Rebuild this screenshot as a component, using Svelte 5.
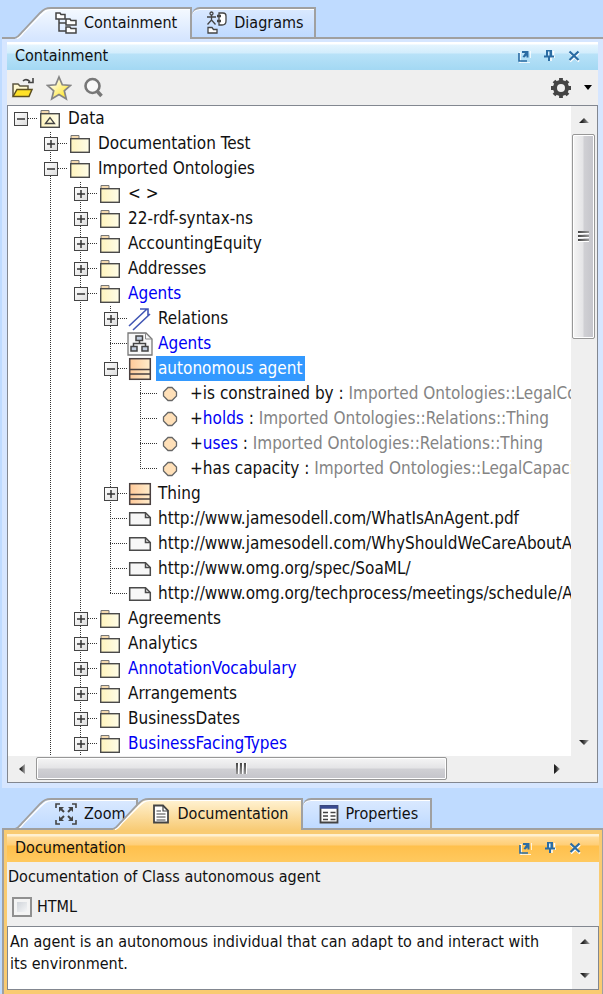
<script lang="ts">
	type IconKind = "model" | "package" | "relations" | "diagram" | "class" | "property" | "file";

	interface TreeRow {
		level: number;
		icon: IconKind;
		text: string;
		/** "+" collapsed, "-" expanded, missing for a leaf */
		toggle?: "+" | "-";
		type?: string;
		link?: boolean;
		selected?: boolean;
		last?: boolean;
	}

	const rows: TreeRow[] = [
		{ level: 0, icon: "model", text: "Data", toggle: "-" },
		{ level: 1, icon: "package", text: "Documentation Test", toggle: "+" },
		{ level: 1, icon: "package", text: "Imported Ontologies", toggle: "-" },
		{ level: 2, icon: "package", text: "< >", toggle: "+" },
		{ level: 2, icon: "package", text: "22-rdf-syntax-ns", toggle: "+" },
		{ level: 2, icon: "package", text: "AccountingEquity", toggle: "+" },
		{ level: 2, icon: "package", text: "Addresses", toggle: "+" },
		{ level: 2, icon: "package", text: "Agents", toggle: "-", link: true },
		{ level: 3, icon: "relations", text: "Relations", toggle: "+" },
		{ level: 3, icon: "diagram", text: "Agents", link: true },
		{ level: 3, icon: "class", text: "autonomous agent", toggle: "-", selected: true },
		{ level: 4, icon: "property", text: "is constrained by", type: "Imported Ontologies::LegalCon" },
		{ level: 4, icon: "property", text: "holds", type: "Imported Ontologies::Relations::Thing", link: true },
		{ level: 4, icon: "property", text: "uses", type: "Imported Ontologies::Relations::Thing", link: true },
		{ level: 4, icon: "property", text: "has capacity", type: "Imported Ontologies::LegalCapacity", last: true },
		{ level: 3, icon: "class", text: "Thing", toggle: "+" },
		{ level: 3, icon: "file", text: "http://www.jamesodell.com/WhatIsAnAgent.pdf" },
		{ level: 3, icon: "file", text: "http://www.jamesodell.com/WhyShouldWeCareAboutA" },
		{ level: 3, icon: "file", text: "http://www.omg.org/spec/SoaML/" },
		{ level: 3, icon: "file", text: "http://www.omg.org/techprocess/meetings/schedule/A", last: true },
		{ level: 2, icon: "package", text: "Agreements", toggle: "+" },
		{ level: 2, icon: "package", text: "Analytics", toggle: "+" },
		{ level: 2, icon: "package", text: "AnnotationVocabulary", toggle: "+", link: true },
		{ level: 2, icon: "package", text: "Arrangements", toggle: "+" },
		{ level: 2, icon: "package", text: "BusinessDates", toggle: "+" },
		{ level: 2, icon: "package", text: "BusinessFacingTypes", toggle: "+", link: true },
	];

	let html = $state(false);
	let documentation = $state(
		"An agent is an autonomous individual that can adapt to and interact with its environment."
	);
</script>

{#snippet slope(fill: string, active: boolean)}
	<svg class="slope" width="36" height="32" viewBox="0 0 36 32" aria-hidden="true">
		<path d="M0 32V31C4 31 5 28 8 25L25 7C29 3 31 1 36 1V32Z" {fill} />
		<path d="M2 31.500C6 30 7 27 9 25L26 8C30 4 32 2.500 36 2.500" fill="none" stroke="#fff" stroke-width="1.500" />
		<path d="M0 31C4 30 5 27 8 24L25 6C29 2 31 1 36 1" fill="none" stroke="#a0a0a0" stroke-width="1.800" />
		{#if !active}
			<path d="M0 31H36" stroke="#a0a0a0" stroke-width="2" />
		{/if}
	</svg>
{/snippet}

{#snippet panelButtons()}
	<div class="panel-buttons">
		<button aria-label="Float">
			<svg width="14" height="14" viewBox="0 0 14 14">
				<path d="M3 3V14H13M14 2V9" fill="none" stroke="#fff" stroke-width="1.500" />
				<path d="M2 4V12H10" fill="none" stroke="#2b6ca3" stroke-width="1.600" />
				<path d="M5 2H11.500V8.500H9.500V6.500L7.500 8.500L5.500 8L8 4H5Z" fill="#2b6ca3" />
			</svg>
		</button>
		<button aria-label="Pin">
			<svg width="14" height="14" viewBox="0 0 14 14">
				<path d="M11.500 2V7M13 8H9V12" fill="none" stroke="#fff" stroke-width="1.500" />
				<path d="M4 1H10V6.500H12V8.500H8V12H6V8.500H2V6.500H4Z" fill="#2b6ca3" />
				<path d="M6 2.500H7.500V6.500H6Z" fill="#d8efff" />
			</svg>
		</button>
		<button aria-label="Close">
			<svg width="14" height="14" viewBox="0 0 14 14">
				<path d="M3 4L12 12.500M12 4L3 12.500" stroke="#fff" stroke-width="2" />
				<path d="M2.500 2.500L11.500 11M11.500 2.500L2.500 11" stroke="#2b6ca3" stroke-width="2.200" />
			</svg>
		</button>
	</div>
{/snippet}

{#snippet arrow(d: string)}
	<svg width="12" height="12" viewBox="0 0 12 12" aria-hidden="true">
		<path {d} fill="url(#arrow-fill)" />
	</svg>
{/snippet}

{#snippet nodeIcon(kind: IconKind)}
	{#if kind === "package" || kind === "model"}
		<svg width="22" height="20" viewBox="0 0 22 20">
			<path d="M2 1.500H10V4.500H2Z" fill="#f3d9ae" stroke="#777" />
			<rect x="1.700" y="4.700" width="18.600" height="13.600" fill="url(#folder-fill)" stroke="#4a4a4a" stroke-width="1.400" />
			{#if kind === "model"}
				<path d="M6.500 14.500L11 8.500L15.500 14.500Z" fill="none" stroke="#444" stroke-width="1.300" />
			{/if}
		</svg>
	{:else if kind === "relations"}
		<svg width="24" height="24" viewBox="0 0 24 24">
			<path d="M1 19L19 2M5 23L22 7M12 2H20V9" fill="none" stroke="#4156b4" stroke-width="1.600" />
		</svg>
	{:else if kind === "diagram"}
		<svg width="26" height="24" viewBox="0 0 26 24">
			<path d="M1 1H19L25 7V23H1Z" fill="#f8f8f8" stroke="#777" stroke-width="1.300" />
			<path d="M18.500 1V7H25" fill="none" stroke="#888" />
			<path d="M12.500 8V11.500M6.500 15V11.500H18.500V15" fill="none" stroke="#444" stroke-width="1.500" />
			<path d="M9 4H15.500V8.500H9ZM4 14.500H10V19H4ZM15 14.500H21V19H15Z" fill="#c3cede" stroke="#444" stroke-width="1.500" />
		</svg>
	{:else if kind === "class"}
		<svg width="24" height="24" viewBox="0 0 24 24">
			<rect x="1.700" y="1.700" width="20.600" height="20.600" fill="url(#class-fill)" stroke="#4a4040" stroke-width="1.500" />
			<path d="M2 12.500H22M2 17H22" stroke="#4a4040" stroke-width="1.400" />
		</svg>
	{:else if kind === "property"}
		<svg width="16" height="16" viewBox="0 0 16 16">
			<path d="M6 1.500H10L14.500 6V10L10 14.500H6L1.500 10V6Z" fill="#ffe0b8" stroke="#666" stroke-width="1.300" />
		</svg>
	{:else}
		<svg width="24" height="16" viewBox="0 0 24 16">
			<path d="M1.700 1.700H17.500L22.300 6.500V14.300H1.700Z" fill="#f7f7f7" stroke="#4a4a4a" stroke-width="1.500" />
			<path d="M17.500 2V6.500H22" fill="none" stroke="#4a4a4a" stroke-width="1.500" />
		</svg>
	{/if}
{/snippet}

<svg class="defs" width="0" height="0" aria-hidden="true">
	<defs>
		<linearGradient id="folder-fill"><stop stop-color="#fff4bd" /><stop offset="1" stop-color="#fffde8" /></linearGradient>
		<linearGradient id="class-fill"><stop stop-color="#ffc999" /><stop offset="1" stop-color="#ffeccb" /></linearGradient>
		<linearGradient id="arrow-fill"><stop offset="0.300" stop-color="#222" /><stop offset="1" stop-color="#aaa" /></linearGradient>
		<linearGradient id="star-fill" x2="1" y2="1"><stop offset="0.200" stop-color="#fffef0" /><stop offset="0.800" stop-color="#ffe83c" /></linearGradient>
		<linearGradient id="blue-tab" x2="0" y2="1"><stop stop-color="#f4f9ff" /><stop offset="1" stop-color="#d6e6ff" /></linearGradient>
		<linearGradient id="idle-tab" x2="0" y2="1"><stop stop-color="#dae9ff" /><stop offset="1" stop-color="#bfdaff" /></linearGradient>
		<linearGradient id="gold-tab" x2="0" y2="1"><stop stop-color="#fff2d2" /><stop offset="1" stop-color="#f8cb75" /></linearGradient>
	</defs>
</svg>

<main>
	<div class="tabs top" role="tablist">
		<span class="rule lead"></span>
		<button class="tab active blue" role="tab" aria-selected="true">
			{@render slope("url(#blue-tab)", true)}
			<span class="face">
				<svg width="24" height="24" viewBox="0 0 24 24" aria-hidden="true">
					<g fill="#fff" stroke="#444" stroke-width="1.500">
						<path d="M5 7V20H12M5 12H12" fill="none" />
						<path d="M2 2H6L7 3.500H11V8H2Z" />
						<path d="M12 8H16L17 9.500H22V14H12Z" />
						<path d="M12 16H16L17 17.500H22V22H12Z" />
					</g>
				</svg>
				Containment
			</span>
		</button>
		<button class="tab idle joined" role="tab" aria-selected="false">
			<span class="face">
				<svg width="22" height="24" viewBox="0 0 22 24" aria-hidden="true">
					<g fill="none" stroke="#444" stroke-width="1.300">
						<circle cx="5.500" cy="2.500" r="1.500" />
						<path d="M1 6H10M5.500 4V9L1.500 13.500M5.500 9L9.500 13.500" />
						<path d="M13 2H17Q20 2 20 5V10Q20 14 16 14H13Z" fill="#fff" />
						<path d="M11 5H15M11 10H15" stroke-width="2.500" />
						<path d="M2 16.500H6L7.500 18.500H11V22H2Z" fill="#fff" />
					</g>
				</svg>
				Diagrams
			</span>
		</button>
		<span class="rule rest"></span>
	</div>

	<section class="panel containment" aria-label="Containment">
		<header>
			<h2>Containment</h2>
			{@render panelButtons()}
		</header>
		<div class="toolbar">
			<button aria-label="Open">
				<svg width="24" height="24" viewBox="0 0 24 24">
					<path d="M2 20V8H7L9 10H17V13" fill="#fff8cf" stroke="#5d5741" stroke-width="1.500" />
					<path d="M2 20.500L6 13.500H21L18 20.500Z" fill="#ffe228" stroke="#5d5020" stroke-width="1.500" />
					<path d="M12 5Q15 2 19 5.500M22 2V6.500H17" fill="none" stroke="#444" stroke-width="1.600" />
				</svg>
			</button>
			<button aria-label="Favorites">
				<svg width="26" height="26" viewBox="0 0 26 26">
					<path d="M13 2L16.300 9.800L24.500 10.500L18.300 15.800L20.300 24L13 19.600L5.700 24L7.700 15.800L1.500 10.500L9.700 9.800Z" fill="url(#star-fill)" stroke="#858585" stroke-width="1.700" />
				</svg>
			</button>
			<button aria-label="Search">
				<svg width="22" height="24" viewBox="0 0 22 24">
					<circle cx="9.500" cy="10" r="7" fill="#f9f9f9" stroke="#777" stroke-width="2.600" />
					<path d="M14 15L18.500 20" stroke="#777" stroke-width="3.500" />
				</svg>
			</button>
			<span class="spacer"></span>
			<button aria-label="Options">
				<svg width="22" height="22" viewBox="0 0 22 22">
					<circle cx="11" cy="11" r="6" fill="none" stroke="#444" stroke-width="4" />
					<path d="M11 1V4M11 18V21M1 11H4M18 11H21M4 4L6 6M16 16L18 18M18 4L16 6M6 16L4 18" stroke="#444" stroke-width="3.800" />
				</svg>
			</button>
			<button aria-label="More options">
				<svg width="10" height="6" viewBox="0 0 10 6"><path d="M1 0H9L5 5Z" fill="#000" /></svg>
			</button>
		</div>

		<div class="tree-box">
			<div class="tree" role="tree">
				{#each rows as row}
					<div class="row" role="treeitem" tabindex="-1" aria-level={row.level + 1} aria-selected={row.selected ?? false}>
						{#each { length: row.level } as _, col}
							<span class="cell" class:line={col > 0}></span>
						{/each}
						<span class="cell own" class:line={row.level > 0} class:last={row.last}>
							{#if row.toggle}
								<button class="toggle" aria-label={row.toggle === "+" ? "Expand" : "Collapse"}>
									<svg width="12" height="12" viewBox="0 0 12 12">
										<path d="M2 6H10" stroke="#333" stroke-width="1.500" />
										{#if row.toggle === "+"}
											<path d="M6 2V10" stroke="#333" stroke-width="1.500" />
										{/if}
									</svg>
								</button>
							{/if}
							<span class="dash"></span>
						</span>
						<span class="icon">{@render nodeIcon(row.icon)}</span>
						<span class="label" class:link={row.link && !row.type} class:selected={row.selected} class:property={row.type}>
							{#if row.type}
								+<span class:link={row.link}>{row.text}</span> : <span class="type">{row.type}</span>
							{:else}
								{row.text}
							{/if}
						</span>
					</div>
				{/each}
			</div>
			<div class="scroll vertical">
				<button aria-label="Scroll up">{@render arrow("M1 9L6 4L11 9Z")}</button>
				<div class="track"><div class="thumb"><span></span><span></span><span></span></div></div>
				<button aria-label="Scroll down">{@render arrow("M1 4H11L6 9Z")}</button>
			</div>
			<div class="scroll horizontal">
				<button aria-label="Scroll left">{@render arrow("M9 1V11L3 6Z")}</button>
				<div class="track"><div class="thumb"><span></span><span></span><span></span></div></div>
				<button aria-label="Scroll right">{@render arrow("M3 1L9 6L3 11Z")}</button>
			</div>
			<div class="corner"></div>
		</div>
	</section>

	<div class="tabs bottom" role="tablist">
		<span class="rule lead"></span>
		<button class="tab idle" role="tab" aria-selected="false">
			{@render slope("url(#idle-tab)", false)}
			<span class="face">
				<svg width="24" height="24" viewBox="0 0 24 24" aria-hidden="true">
					<g fill="none" stroke="#444" stroke-width="1.600">
						<path d="M2 6V2H6M18 2H22V6M22 18V22H18M6 22H2V18" />
						<path d="M6 6L10 10M18 6L14 10M18 18L14 14M6 18L10 14" stroke-width="2" />
					</g>
					<path d="M5 5H10L5 10ZM19 5H14L19 10ZM19 19H14L19 14ZM5 19H10L5 14Z" fill="#444" />
				</svg>
				Zoom
			</span>
		</button>
		<button class="tab active gold" role="tab" aria-selected="true">
			{@render slope("url(#gold-tab)", true)}
			<span class="face">
				<svg width="18" height="20" viewBox="0 0 18 20" aria-hidden="true">
					<path d="M2 1.500H11L16 6.500V18.500H2Z" fill="#fff" stroke="#444" stroke-width="1.800" />
					<path d="M11 2V7H16M4.500 10H13.500M4.500 13H13.500M4.500 16H13.500M4.500 7H9" fill="none" stroke="#444" stroke-width="1.200" />
				</svg>
				Documentation
			</span>
		</button>
		<button class="tab idle joined" role="tab" aria-selected="false">
			<span class="face">
				<svg width="20" height="20" viewBox="0 0 20 20" aria-hidden="true">
					<path d="M1.500 2H18.500V18.500H1.500Z" fill="#fff" stroke="#444" stroke-width="1.800" />
					<path d="M1 3H19" stroke="#384a90" stroke-width="3.500" />
					<path d="M4 8.500H9M4 12H9M4 15.500H9M11.500 8.500H16.500M11.500 12H16.500M11.500 15.500H16.500" stroke="#444" stroke-width="1.500" />
				</svg>
				Properties
			</span>
		</button>
		<span class="rule rest"></span>
	</div>

	<section class="panel documentation" aria-label="Documentation">
		<header>
			<h2>Documentation</h2>
			{@render panelButtons()}
		</header>
		<div class="doc-head">
			<p>Documentation of Class autonomous agent</p>
			<label><input type="checkbox" bind:checked={html} />HTML</label>
		</div>
		<div class="doc-box">
			<textarea aria-label="Documentation text" spellcheck="false" bind:value={documentation}></textarea>
			<div class="scroll vertical">
				<button aria-label="Scroll up">{@render arrow("M1 9L6 4L11 9Z")}</button>
				<div class="track"></div>
				<button aria-label="Scroll down">{@render arrow("M1 4H11L6 9Z")}</button>
			</div>
		</div>
	</section>
</main>

<style>
	:global(body) {
		margin: 0;
		background: #bfdbff;
	}

	main {
		padding: 7px 0 0 2px;
		font: 16px/24px "DejaVu Sans Condensed", "Noto Sans", sans-serif;
		color: #111;
	}

	.defs {
		position: absolute;
	}

	svg {
		display: block;
		flex-shrink: 0;
	}

	button {
		display: flex;
		align-items: center;
		justify-content: center;
		padding: 0;
		border: 0;
		background: none;
		font: inherit;
		color: inherit;
	}

	/* tabs */
	.tabs {
		display: flex;
		height: 32px;
	}

	.tabs.bottom {
		margin-top: 10px;
	}

	.rule {
		box-sizing: border-box;
		border-bottom: 2px solid #a0a0a0;
	}

	.lead {
		width: 13px;
	}

	.rest {
		flex: 1;
	}

	.tab {
		align-items: stretch;
	}

	.face {
		box-sizing: border-box;
		display: flex;
		align-items: center;
		gap: 6px;
		padding: 0 10px 2px 3px;
		border-top: 2px solid #a0a0a0;
		border-right: 2px solid #a0a0a0;
		box-shadow: inset 0 1px #fff;
	}

	.active .face {
		padding-right: 13px;
	}

	.blue .face {
		background: linear-gradient(#f4f9ff, #d6e6ff);
	}

	.gold .face {
		background: linear-gradient(#fff2d2, #f8cb75);
		gap: 8px;
	}

	.idle .face {
		border-bottom: 2px solid #a0a0a0;
		padding-bottom: 0;
		background: linear-gradient(#dae9ff, #bfdaff);
	}

	.joined .face {
		padding-left: 14px;
		border-top-left-radius: 8px;
	}

	.bottom .joined .face {
		padding: 0 12px 0 16px;
	}

	.gold {
		margin-left: -25px;
		z-index: 1;
	}

	/* panels */
	.panel {
		padding: 3px 5px 5px;
		background: #d6e6ff;
	}

	header {
		display: flex;
		align-items: center;
		justify-content: space-between;
		height: 28px;
		padding: 0 17px 0 8px;
		background: linear-gradient(#fff 2px, #e4f4fe 3px, #d2edfc 11px, #b8e2f8 12px, #a3d8f3);
	}

	h2 {
		margin: 0;
		font: inherit;
	}

	.panel-buttons {
		display: flex;
		gap: 11px;
	}

	.toolbar {
		display: flex;
		align-items: center;
		gap: 11px;
		height: 35px;
		padding: 0 5px 0 4px;
		background: #efefef;
	}

	.spacer {
		flex: 1;
	}

	.tree-box {
		display: grid;
		grid-template-columns: minmax(0, 1fr) 26px;
		grid-template-rows: auto 26px;
		border: 1px solid #828790;
		background: #fff;
	}

	.tree {
		overflow: hidden;
		font-size: 17px;
	}

	.row {
		display: flex;
		align-items: center;
		height: 25px;
		white-space: nowrap;
	}

	.cell {
		flex: 0 0 30px;
		height: 25px;
		background-repeat: repeat-y;
		background-position: 12px 0;
		background-size: 1px 2px;
	}

	.line {
		background-image: linear-gradient(#333 50%, transparent 50%);
	}

	.row:nth-child(even) .cell {
		background-position: 12px 1px;
	}

	.own {
		box-sizing: border-box;
		display: flex;
		align-items: center;
		padding-left: 6px;
	}

	.own:not(:has(.toggle)) {
		padding-left: 12px;
	}

	.last {
		height: 13px;
		align-self: flex-start;
		align-items: flex-end;
	}

	.dash {
		flex: 1;
		height: 1px;
		margin-right: 1px;
		background: repeating-linear-gradient(90deg, #333 0 1px, transparent 1px 2px);
	}

	.toggle {
		box-sizing: border-box;
		width: 14px;
		height: 14px;
		border: 1px solid #444;
		background: linear-gradient(135deg, #fff, #ddd);
	}

	.icon {
		flex: 0 0 24px;
		min-width: 0;
		display: flex;
		justify-content: center;
	}

	.label {
		height: 25px;
		margin-left: 4px;
		padding: 0 3px 0 2px;
		line-height: 25px;
	}

	.property {
		margin-left: 6px;
	}

	.link {
		color: #0000f5;
	}

	.type {
		color: #848484;
	}

	.selected {
		background: #3399ff;
		color: #fff;
	}

	/* scroll bars */
	.scroll {
		display: flex;
		background: #efefef;
	}

	.scroll button {
		flex: 0 0 28px;
	}

	.track {
		display: flex;
		flex: 1;
	}

	.vertical,
	.vertical .track {
		flex-direction: column;
	}

	.thumb {
		box-sizing: border-box;
		display: flex;
		align-items: center;
		justify-content: center;
		gap: 1px;
		border: 1px solid #979797;
		border-radius: 2px;
		box-shadow: inset 0 0 0 1px #fff;
	}

	.vertical .thumb {
		flex-direction: column;
		flex-basis: 34.5%;
		margin: 0 2px 0 1px;
		background: linear-gradient(90deg, #f5f5f5, #e4e4e6 48%, #d0d0d4 52%, #c4c4ca);
	}

	.horizontal .thumb {
		flex-basis: 81%;
		margin: 1px 0 2px;
		background: linear-gradient(#f5f5f5, #e4e4e6 48%, #d0d0d4 52%, #c4c4ca);
	}

	.thumb span {
		width: 11px;
		height: 2px;
		border-bottom: 1px solid #fff;
		background: linear-gradient(90deg, #444, #999);
	}

	.horizontal .thumb span {
		width: 2px;
		height: 11px;
		border: 0;
		border-right: 1px solid #fff;
		background: linear-gradient(#444, #999);
	}

	.corner {
		background: #efefef;
	}

	/* documentation */
	.documentation {
		padding: 4px 3px;
		border: solid #a0a0a0;
		border-width: 0 1px 2px 2px;
		background: #f9cb72;
	}

	.documentation header {
		background: linear-gradient(#fff0d0 2px, #ffdc9b 3px, #ffce76 11px, #ffc04c 12px, #ffc95f);
	}

	.doc-head {
		padding: 2px 1px 5px;
		background: #efefef;
	}

	.doc-head p {
		margin: 0;
		line-height: 25px;
	}

	.doc-head label {
		display: flex;
		align-items: center;
		gap: 5px;
		height: 32px;
		padding: 4px 4px 0;
		box-sizing: border-box;
	}

	input {
		appearance: none;
		box-sizing: border-box;
		width: 20px;
		height: 20px;
		margin: 0;
		border: 2px solid #909090;
		background: linear-gradient(135deg, #c6cbd2, #fff);
		box-shadow: inset 0 0 0 3px #f4f4f4;
	}

	.doc-box {
		display: flex;
		border: 1px solid #828790;
		background: #fff;
	}

	textarea {
		box-sizing: border-box;
		flex: 1;
		min-width: 0;
		height: 62px;
		padding: 4px 20px 4px 2px;
		border: 0;
		outline: 0;
		resize: none;
		overflow: hidden;
		font: inherit;
		line-height: 22px;
		color: inherit;
	}

	.doc-box .scroll {
		flex: 0 0 26px;
	}
</style>
